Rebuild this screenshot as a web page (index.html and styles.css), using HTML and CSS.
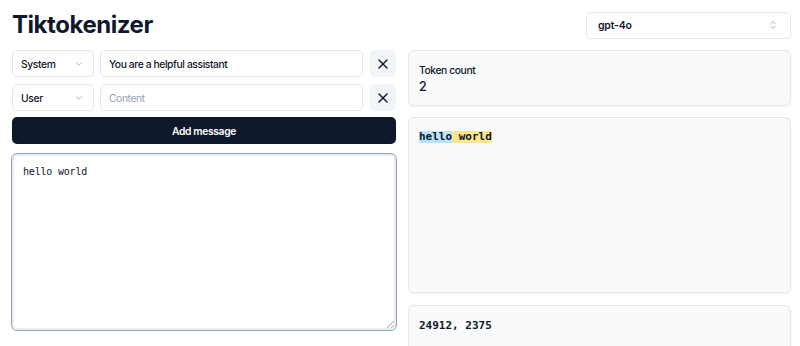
FILE: index.html
```html
<!DOCTYPE html>
<html>
<head>
<meta charset="utf-8">
<link rel="stylesheet" href="styles.css">
</head>
<body>
<div class="page">
  <header class="header">
    <h1 class="title">Tiktokenizer</h1>
    <div class="model-select">
      <span>gpt-4o</span>
      <svg class="updown" width="10" height="10" viewBox="0 0 24 24" fill="none" stroke="#9ca3af" stroke-width="2.2" stroke-linecap="round" stroke-linejoin="round"><path d="m7 15 5 5 5-5"/><path d="m7 9 5-5 5 5"/></svg>
    </div>
  </header>
  <main class="grid">
    <section class="left">
      <div class="msg-row">
        <div class="role-select"><span>System</span><svg width="10" height="10" viewBox="0 0 24 24" fill="none" stroke="#9ca3af" stroke-width="2" stroke-linecap="round" stroke-linejoin="round"><path d="m6 9 6 6 6-6"/></svg></div>
        <div class="content-input">You are a helpful assistant</div>
        <div class="x-btn"><svg width="16" height="16" viewBox="0 0 24 24" fill="none" stroke="#0f172a" stroke-width="2" stroke-linecap="round"><path d="M18 6 6 18"/><path d="m6 6 12 12"/></svg></div>
      </div>
      <div class="msg-row">
        <div class="role-select"><span>User</span><svg width="10" height="10" viewBox="0 0 24 24" fill="none" stroke="#9ca3af" stroke-width="2" stroke-linecap="round" stroke-linejoin="round"><path d="m6 9 6 6 6-6"/></svg></div>
        <div class="content-input placeholder">Content</div>
        <div class="x-btn"><svg width="16" height="16" viewBox="0 0 24 24" fill="none" stroke="#0f172a" stroke-width="2" stroke-linecap="round"><path d="M18 6 6 18"/><path d="m6 6 12 12"/></svg></div>
      </div>
      <div class="add-btn">Add message</div>
      <div class="textarea">hello world<span class="grip"></span></div>
    </section>
    <section class="right">
      <div class="card count-card">
        <div class="count-label">Token count</div>
        <div class="count-value">2</div>
      </div>
      <div class="card tokens-card"><span class="tok t1">hello</span><span class="tok t2"> world</span></div>
      <div class="card ids-card">24912, 2375</div>
    </section>
  </main>
</div>
</body>
</html>
```
FILE: styles.css
```css
* { box-sizing: border-box; }
body {
  margin: 0;
  font-family: Inter, "Noto Sans", sans-serif;
  color: #0f172a;
  background: #fff;
  overflow: hidden;
}
.page {
  padding: 12px 9px 0 12px;
}
.header {
  display: flex;
  justify-content: space-between;
  align-items: center;
  height: 26px;
}
.title {
  margin: 0;
  font-size: 24px;
  font-weight: 700;
  letter-spacing: -0.45px;
  line-height: 26px;
}
.model-select {
  width: 205px;
  height: 27px;
  border: 1px solid #e5e7eb;
  border-radius: 5px;
  display: flex;
  align-items: center;
  justify-content: space-between;
  padding: 0 12px 0 11px;
  font-size: 10.5px;
  font-weight: 600;
  letter-spacing: -0.2px;
}
.grid {
  display: grid;
  grid-template-columns: 384px 383px;
  gap: 12px;
  margin-top: 12px;
}
.left {
  display: flex;
  flex-direction: column;
  gap: 7px;
}
.msg-row {
  display: flex;
  gap: 6px;
  height: 27px;
}
.role-select {
  width: 82px;
  border: 1px solid #e5e7eb;
  border-radius: 5px;
  display: flex;
  align-items: center;
  justify-content: space-between;
  padding: 0 9px 0 8px;
  font-size: 10.3px;
  font-weight: 500;
  letter-spacing: -0.35px;
}
.content-input {
  flex: 1;
  border: 1px solid #e5e7eb;
  border-radius: 5px;
  display: flex;
  align-items: center;
  padding: 0 8px;
  font-size: 10.3px;
  font-weight: 500;
  letter-spacing: -0.4px;
}
.content-input.placeholder { color: #94a3b8; font-weight: 400; }
.x-btn {
  width: 26px;
  margin-left: 1px;
  background: #f1f5f9;
  border-radius: 5px;
  display: flex;
  align-items: center;
  justify-content: center;
}
.add-btn {
  height: 27px;
  margin-top: -1px;
  background: #0f172a;
  color: #fff;
  border-radius: 5px;
  display: flex;
  align-items: center;
  justify-content: center;
  font-size: 10.3px;
  font-weight: 600;
  letter-spacing: -0.35px;
}
.textarea {
  position: relative;
  height: 178px;
  margin: 2px -1px 0 -1px;
  border: 1px solid #94a3b8;
  box-shadow: inset 0 0 0 2px #e8edf3;
  border-radius: 6px;
  padding: 12px 11px;
  font-family: "DejaVu Sans Mono", monospace;
  font-size: 10px;
  letter-spacing: -0.2px;
}
.grip {
  position: absolute;
  right: 2px;
  bottom: 2px;
  width: 7px;
  height: 7px;
  background: linear-gradient(135deg, transparent 45%, #9ca3af 45%, #9ca3af 55%, transparent 55%, transparent 75%, #9ca3af 75%, #9ca3af 85%, transparent 85%);
}
.right {
  display: flex;
  flex-direction: column;
  gap: 11px;
}
.card {
  background: #f8fafc;
  border: 1px solid #e5e7eb;
  border-radius: 6px;
  box-shadow: 0 1px 2px rgba(0,0,0,0.05);
  padding: 11px 10px;
}
.count-card { height: 56px; }
.count-label { font-size: 10.3px; line-height: 13px; margin-top: 2px; font-weight: 500; letter-spacing: -0.4px; }
.count-value { font-size: 12.5px; line-height: 16px; margin-top: 2px; font-weight: 500; }
.tokens-card {
  height: 176px;
  padding-top: 13px;
  font-family: "DejaVu Sans Mono", monospace;
  font-size: 11px;
  line-height: 11px;
  font-weight: 600;
}
.tok { white-space: pre; display: inline-block; height: 12px; line-height: 12px; }
.t1 { background: #b9e3f8; }
.t2 { background: #fde68a; }
.ids-card {
  height: 60px;
  margin-top: 1px;
  padding-top: 13px;
  font-family: "DejaVu Sans Mono", monospace;
  font-size: 11px;
  font-weight: 600;
}
```
